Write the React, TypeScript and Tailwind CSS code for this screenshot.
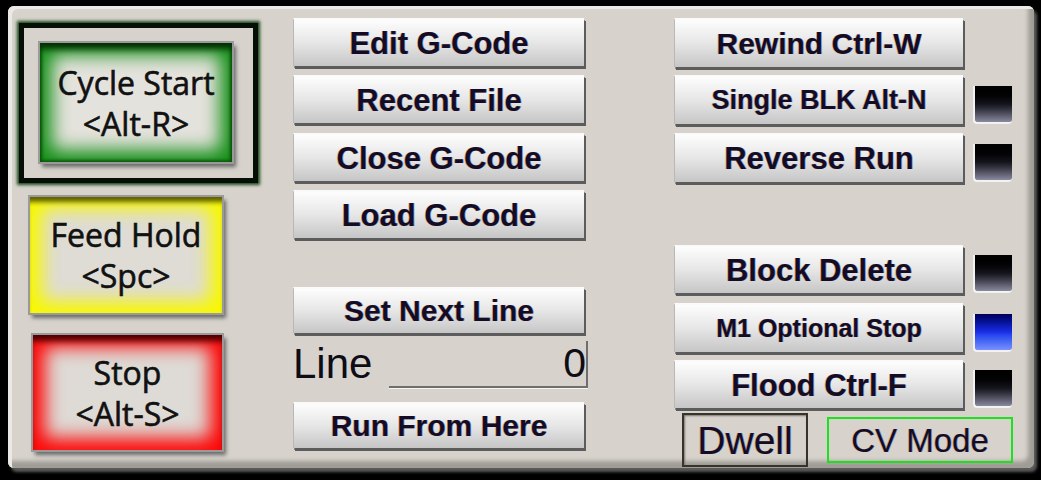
import React from "react";

const arial = { fontFamily: '"Liberation Sans", Arial, sans-serif' } as const;
const sans = { fontFamily: '"Open Sans", "Noto Sans", sans-serif' } as const;

function Btn({ label, className = "", text = "text-[31px]" }: { label: string; className?: string; text?: string }) {
  return (
    <div
      className={`flex items-center justify-center bg-gradient-to-b from-[#fdfdfd] via-[#e6e6e6] to-[#c6c6c6] border-t-2 border-l border-t-[#fafafa] border-l-[#b8b8b8] shadow-[2px_3px_0_#5c5c5c,1px_2px_0_#8a8a8a] font-bold leading-none text-[#140c24] [text-shadow:-0.7px_0_rgba(210,120,20,0.5),0.7px_0_rgba(20,90,210,0.5)] ${text} ${className}`}
      style={arial}
    >
      <span className="whitespace-nowrap">{label}</span>
    </div>
  );
}

function Led({ on = false }: { on?: boolean }) {
  return (
    <div
      className={`w-[39px] h-[38px] rounded-b-[4px] border-l-2 border-b-2 border-[#f2f2f2] ${
        on
          ? "bg-gradient-to-b from-[#00005a] via-[#1a2ee8] to-[#7a90ff]"
          : "bg-gradient-to-b from-[#000000] via-[#14141c] to-[#8a8aa0]"
      }`}
    />
  );
}

function Glow({
  l1,
  l2,
  className,
}: {
  l1: string;
  l2: string;
  className: string;
}) {
  return (
    <div
      className={`flex flex-col items-center justify-center text-[32px] leading-[41px] text-[#111111] [-webkit-text-stroke:0.6px_#111111] ${className}`}
      style={sans}
    >
      <span className="whitespace-nowrap">{l1}</span>
      <span className="whitespace-nowrap">{l2}</span>
    </div>
  );
}

export default function App() {
  return (
    <div className="w-[1041px] h-[480px] bg-black overflow-hidden pt-[6px] pl-[8px]">
      <div className="w-[1026px] h-[462px] rounded-[6px] bg-[#d7d3cc] shadow-[inset_4px_3px_0_#ebe9e5,inset_-6px_-7px_4px_#9f9c96,3px_4px_3px_#5a5a5a] flex pl-[11px]">
        {/* Column 1 */}
        <div className="w-[239px] flex flex-col">
          <div className="mt-[17px] w-[239px] h-[160px] border-[5px] border-[#050f05] shadow-[0_0_3px_2px_#1c4a1c] pl-[16px] pt-[15px]">
            <Glow
              l1="Cycle Start"
              l2="<Alt-R>"
              className="w-[192px] h-[119px] bg-[#e4e2dc] shadow-[inset_0_9px_6px_-3px_#053005,inset_0_0_3px_2px_#0b5a0b,inset_0_0_18px_12px_#159018,0_0_0_2px_#9a9a9a,3px_4px_4px_1px_#6a6a6a]"
            />
          </div>
          <Glow
            l1="Feed Hold"
            l2="<Spc>"
            className="mt-[14px] ml-[11px] w-[192px] h-[116px] bg-[#dedcd4] shadow-[inset_0_8px_5px_-3px_#5e5e00,inset_0_0_18px_12px_#f8f800,0_0_0_2px_#9a9a9a,3px_4px_4px_1px_#6a6a6a]"
          />
          <Glow
            l1="Stop"
            l2="<Alt-S>"
            className="mt-[22px] ml-[14px] w-[189px] h-[115px] bg-[#dedad5] shadow-[inset_0_9px_6px_-3px_#4a0000,inset_0_0_18px_12px_#fc0808,0_0_0_2px_#9a9a9a,3px_4px_4px_1px_#6a6a6a]"
          />
        </div>

        {/* Column 2 */}
        <div className="ml-[35px] w-[295px] flex flex-col">
          <Btn label="Edit G-Code" className="mt-[12px] w-[291px] h-[48px]" />
          <Btn label="Recent File" className="mt-[9px] w-[291px] h-[48px]" />
          <Btn label="Close G-Code" className="mt-[10px] w-[291px] h-[48px]" />
          <Btn label="Load G-Code" className="mt-[9px] w-[291px] h-[48px]" />
          <Btn label="Set Next Line" className="mt-[49px] w-[291px] h-[46px]" text="text-[30px]" />
          <div className="mt-[7px] h-[48px] flex items-end" style={arial}>
            <span className="text-[42px] leading-none text-[#0e0c14] pb-[3px] w-[96px]">Line</span>
            <div className="flex-1 h-[47px] flex items-end justify-end border-b-2 border-r-2 border-b-[#6e6e6e] border-r-[#6e6e6e] shadow-[0_1px_0_#f4f4f4]">
              <span className="text-[41px] leading-none text-[#0e0c14] pb-[2px]">0</span>
            </div>
          </div>
          <Btn label="Run From Here" className="mt-[14px] w-[291px] h-[46px]" text="text-[30px]" />
        </div>

        {/* Column 3 */}
        <div className="ml-[86px] flex flex-col">
          <div className="mt-[12px] flex items-end gap-[10px]">
            <Btn label="Rewind Ctrl-W" className="w-[289px] h-[49px]" text="text-[30px]" />
          </div>
          <div className="mt-[8px] flex items-end gap-[10px]">
            <Btn label="Single BLK Alt-N" className="w-[289px] h-[49px]" text="text-[27px]" />
            <Led />
          </div>
          <div className="mt-[9px] flex items-end gap-[10px]">
            <Btn label="Reverse Run" className="w-[289px] h-[49px]" />
            <Led />
          </div>
          <div className="mt-[63px] flex items-end gap-[10px]">
            <Btn label="Block Delete" className="w-[289px] h-[48px]" />
            <Led />
          </div>
          <div className="mt-[10px] flex items-end gap-[10px]">
            <Btn label="M1 Optional Stop" className="w-[289px] h-[49px]" text="text-[25px]" />
            <Led on />
          </div>
          <div className="mt-[8px] flex items-end gap-[10px]">
            <Btn label="Flood Ctrl-F" className="w-[289px] h-[48px]" />
            <Led />
          </div>
          <div className="mt-[5px] flex items-center" style={arial}>
            <div className="ml-[8px] w-[126px] h-[54px] border-2 border-[#35332a] shadow-[inset_1px_1px_2px_#7a7870] flex items-center justify-center text-[39px] leading-none text-[#140c24] [text-shadow:-0.7px_0_rgba(210,120,20,0.5),0.7px_0_rgba(20,90,210,0.5)]">
              Dwell
            </div>
            <div className="ml-[19px] w-[186px] h-[46px] border-2 border-[#1ee01e] flex items-center justify-center text-[33px] leading-none text-[#140c24] [text-shadow:-0.7px_0_rgba(210,120,20,0.5),0.7px_0_rgba(20,90,210,0.5)]">
              CV Mode
            </div>
          </div>
        </div>
      </div>
    </div>
  );
}
